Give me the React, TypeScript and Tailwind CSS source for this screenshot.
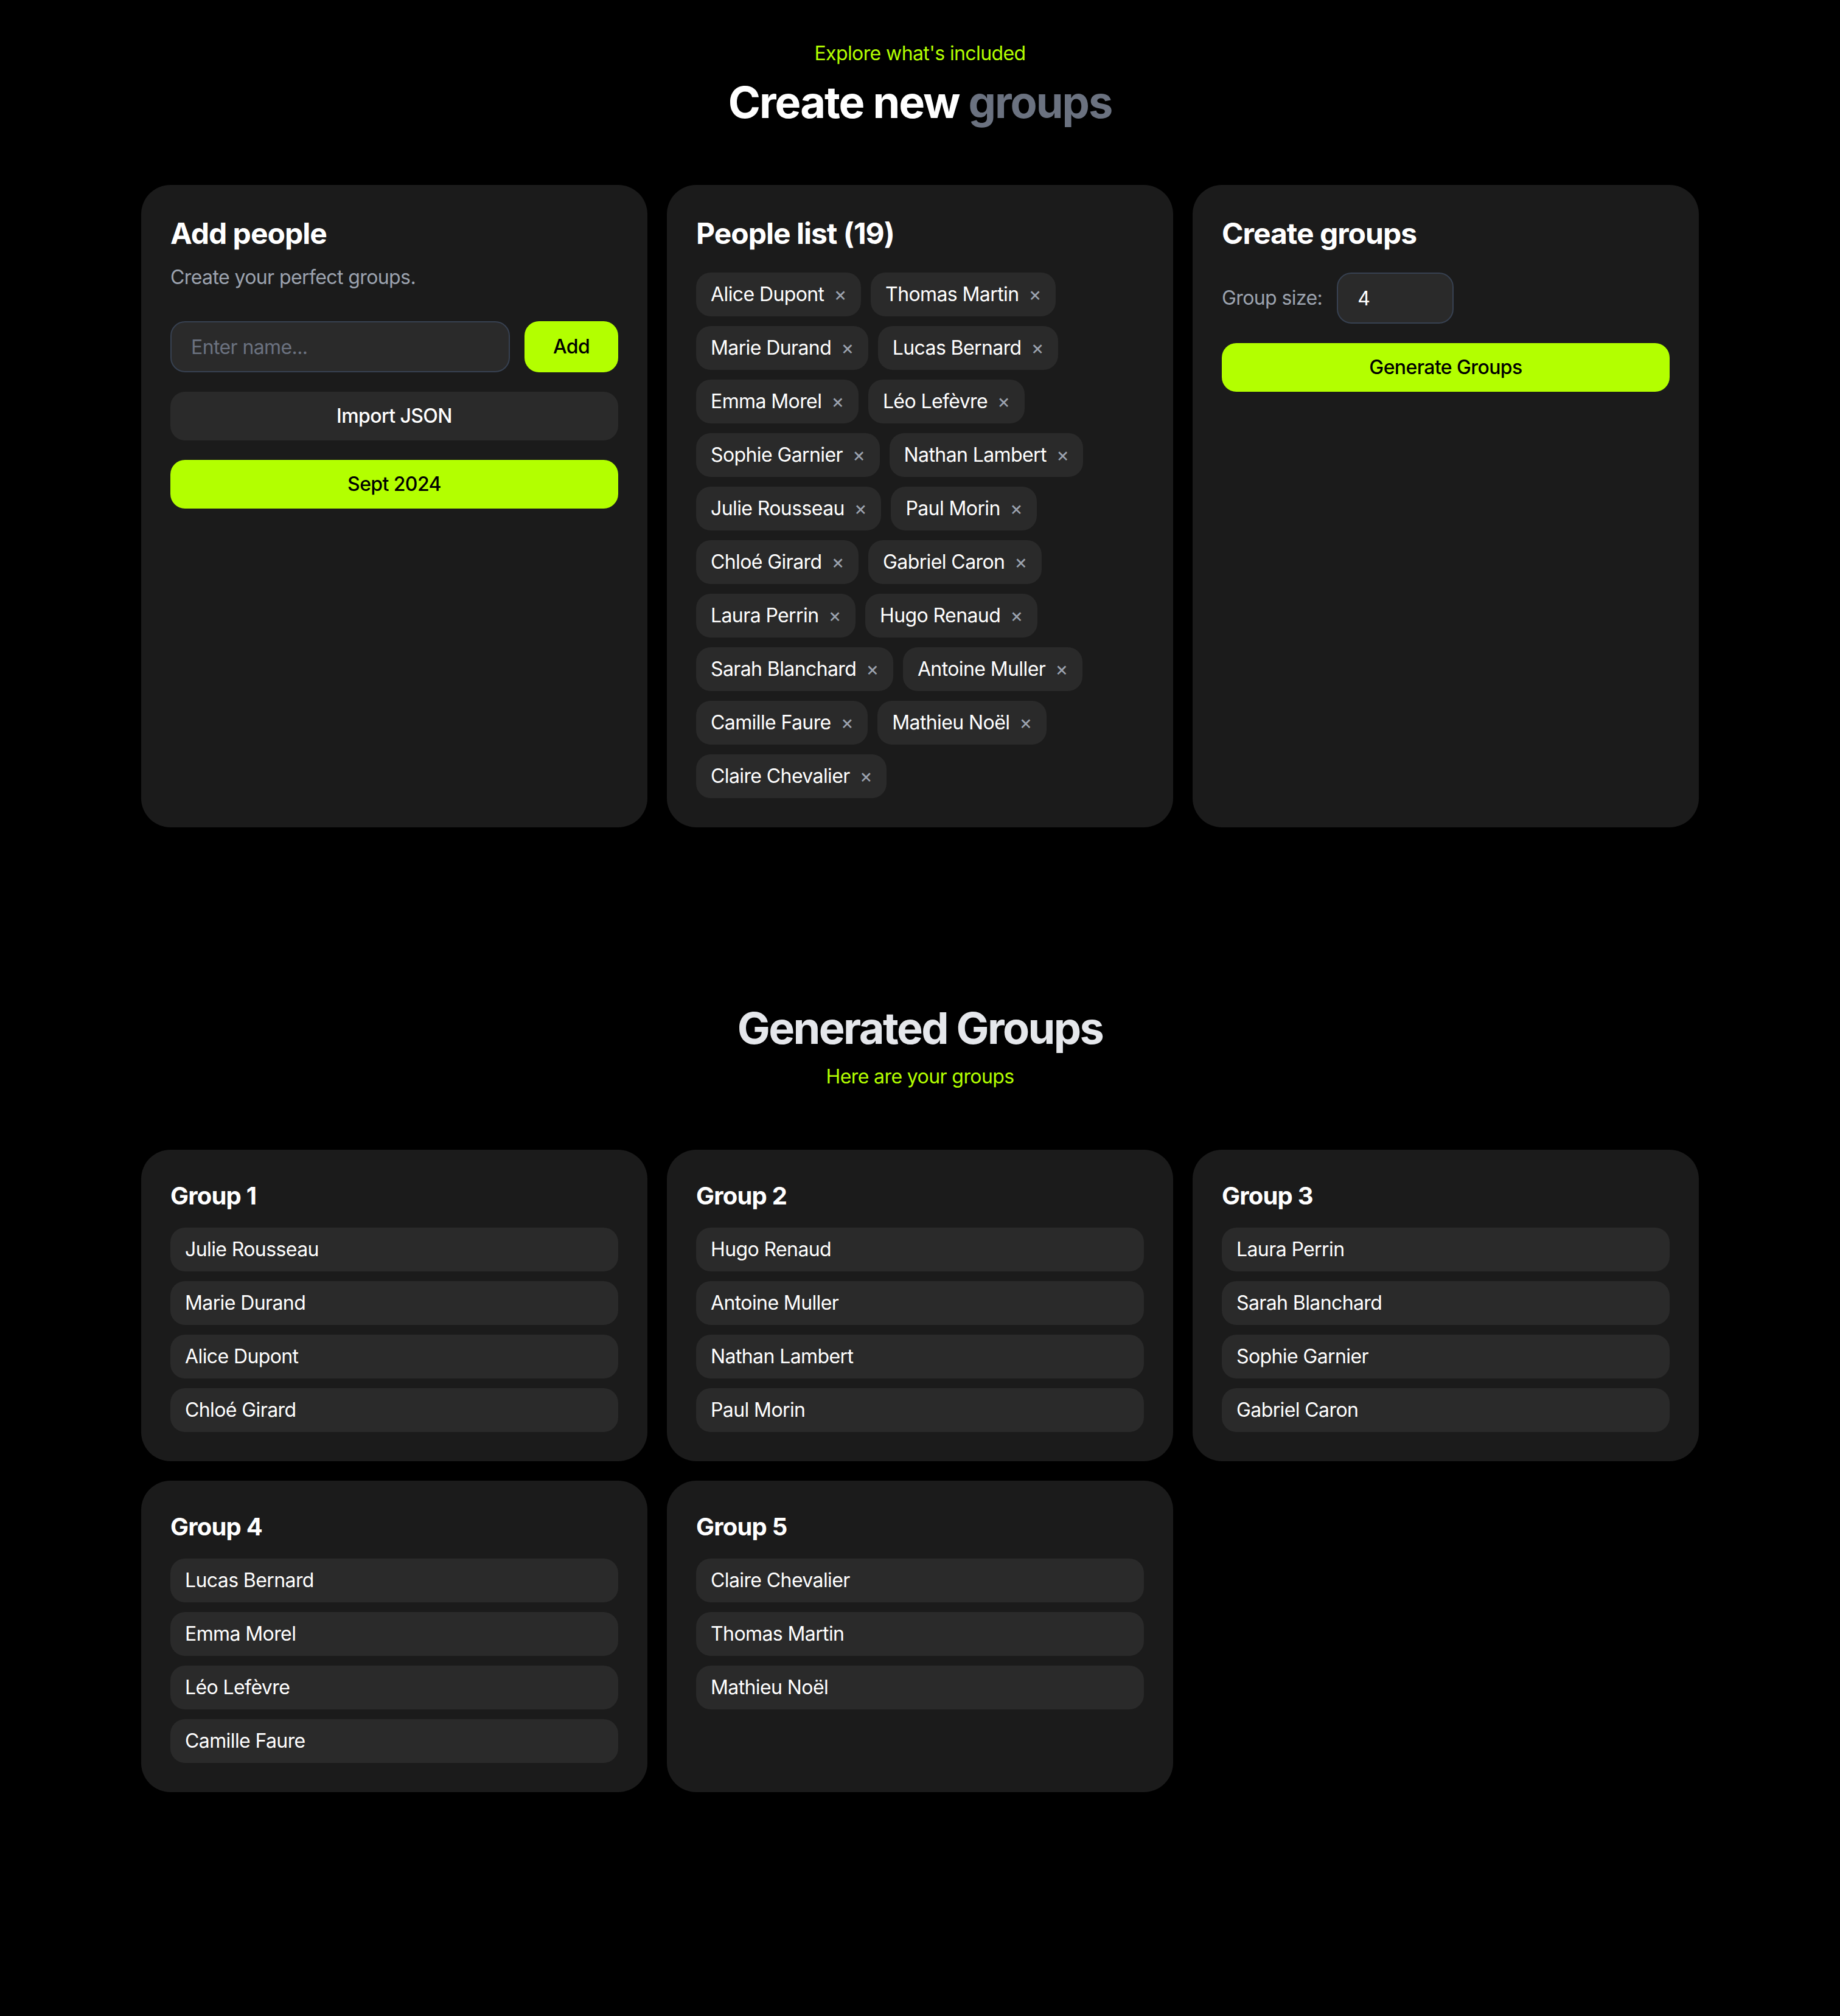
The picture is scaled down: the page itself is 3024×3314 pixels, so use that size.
import React from "react";

const people = [
  "Alice Dupont",
  "Thomas Martin",
  "Marie Durand",
  "Lucas Bernard",
  "Emma Morel",
  "Léo Lefèvre",
  "Sophie Garnier",
  "Nathan Lambert",
  "Julie Rousseau",
  "Paul Morin",
  "Chloé Girard",
  "Gabriel Caron",
  "Laura Perrin",
  "Hugo Renaud",
  "Sarah Blanchard",
  "Antoine Muller",
  "Camille Faure",
  "Mathieu Noël",
  "Claire Chevalier",
];

const groups: string[][] = [
  ["Julie Rousseau", "Marie Durand", "Alice Dupont", "Chloé Girard"],
  ["Hugo Renaud", "Antoine Muller", "Nathan Lambert", "Paul Morin"],
  ["Laura Perrin", "Sarah Blanchard", "Sophie Garnier", "Gabriel Caron"],
  ["Lucas Bernard", "Emma Morel", "Léo Lefèvre", "Camille Faure"],
  ["Claire Chevalier", "Thomas Martin", "Mathieu Noël"],
];

function Card({ children }: { children: React.ReactNode }) {
  return <div className="bg-[#1b1b1b] rounded-[48px] p-[48px] flex flex-col">{children}</div>;
}

function CardTitle({ children }: { children: React.ReactNode }) {
  return <h2 className="text-[48px] leading-[64px] font-bold text-white tracking-[-1px]">{children}</h2>;
}

export default function App() {
  return (
    <div className="min-h-screen bg-black font-[Inter,sans-serif] text-white tracking-[-0.6px]">
      <div className="max-w-[2560px] mx-auto pt-[64px] pb-[128px]">
        <div className="flex flex-col items-center">
          <p className="text-[32px] leading-[48px] text-[#b3ff00]">Explore what's included</p>
          <h1 className="mt-[16px] text-[72px] leading-[80px] font-bold tracking-[-2px]">
            <span className="text-white">Create new </span>
            <span className="text-[#6b7280]">groups</span>
          </h1>
        </div>

        <div className="mt-[96px] grid grid-cols-3 gap-[32px]">
          <Card>
            <CardTitle>Add people</CardTitle>
            <p className="mt-[16px] text-[32px] leading-[48px] text-[#9ca3af]">Create your perfect groups.</p>
            <div className="mt-[48px] flex gap-[24px]">
              <input
                className="flex-1 min-w-0 h-[84px] bg-[#2a2a2a] border-2 border-[#374151] rounded-[24px] px-[32px] text-[32px] tracking-[-0.6px] text-white placeholder:text-[#6b7280] outline-none"
                placeholder="Enter name..."
              />
              <button className="w-[154px] h-[84px] bg-[#b3ff00] rounded-[24px] text-[32px] font-medium text-black">
                Add
              </button>
            </div>
            <button className="mt-[32px] h-[80px] w-full bg-[#2a2a2a] rounded-[24px] text-[32px] font-medium text-white">
              Import JSON
            </button>
            <button className="mt-[32px] h-[80px] w-full bg-[#b3ff00] rounded-[24px] text-[32px] font-medium text-black">
              Sept 2024
            </button>
          </Card>

          <Card>
            <CardTitle>People list (19)</CardTitle>
            <div className="mt-[32px] flex flex-wrap gap-[16px]">
              {people.map((p) => (
                <div
                  key={p}
                  className="h-[72px] flex items-center bg-[#2a2a2a] rounded-[24px] pl-[24px] pr-[24px] text-[32px] leading-[48px] text-white"
                >
                  <span>{p}</span>
                  <span className="ml-[16px] text-[#9ca3af] text-[32px]">×</span>
                </div>
              ))}
            </div>
          </Card>

          <Card>
            <CardTitle>Create groups</CardTitle>
            <div className="mt-[32px] flex items-center gap-[24px]">
              <span className="text-[32px] leading-[48px] text-[#9ca3af]">Group size:</span>
              <input
                className="w-[192px] h-[84px] bg-[#2a2a2a] border-2 border-[#374151] rounded-[24px] px-[32px] text-[32px] text-white outline-none"
                defaultValue="4"
              />
            </div>
            <button className="mt-[32px] h-[80px] w-full bg-[#b3ff00] rounded-[24px] text-[32px] font-medium text-black">
              Generate Groups
            </button>
          </Card>
        </div>

        <div className="mt-[290px] flex flex-col items-center">
          <h2 className="text-[72px] leading-[80px] font-bold text-[#e5e7eb] tracking-[-2.6px]">Generated Groups</h2>
          <p className="mt-[16px] text-[32px] leading-[48px] text-[#b3ff00]">Here are your groups</p>
        </div>

        <div className="mt-[96px] grid grid-cols-3 gap-[32px]">
          {groups.map((g, i) => (
            <div key={i} className="bg-[#1b1b1b] rounded-[48px] p-[48px]">
              <h3 className="text-[40px] leading-[56px] font-bold text-white tracking-[-0.8px]">Group {i + 1}</h3>
              <div className="mt-[24px] flex flex-col gap-[16px]">
                {g.map((m) => (
                  <div
                    key={m}
                    className="h-[72px] flex items-center bg-[#2a2a2a] rounded-[24px] px-[24px] text-[32px] leading-[48px] text-white"
                  >
                    {m}
                  </div>
                ))}
              </div>
            </div>
          ))}
        </div>
      </div>
    </div>
  );
}
